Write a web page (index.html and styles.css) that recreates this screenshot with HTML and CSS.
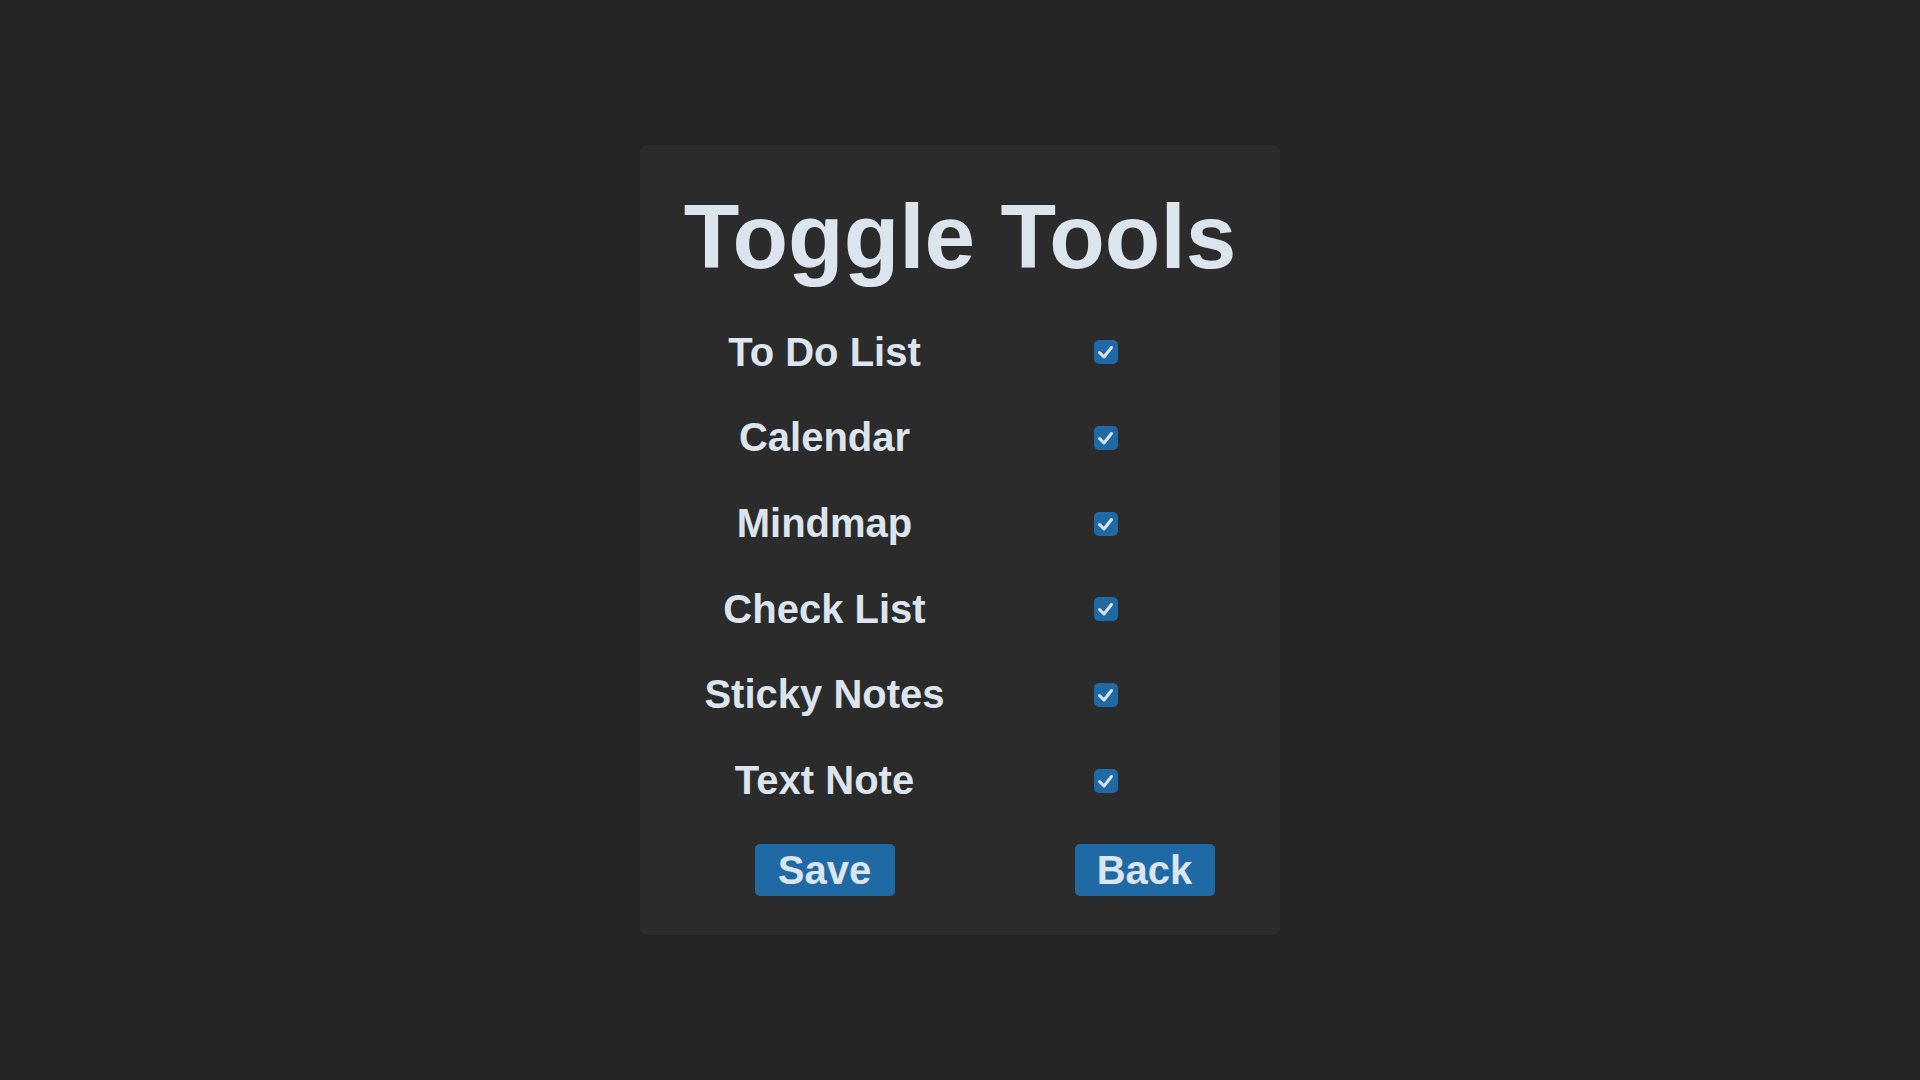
FILE: index.html
```html
<!DOCTYPE html>
<html lang="en">
<head>
<meta charset="utf-8">
<title>Toggle Tools</title>
<link rel="stylesheet" href="styles.css">
</head>
<body>
<main class="card">
  <h1 class="title">Toggle Tools</h1>
  <div class="rows">
    <div class="row"><span class="label">To Do List</span><span class="cell"><span class="check"><svg viewBox="0 0 24 24" width="24" height="24"><polyline points="5.5,12.5 10,17 17.5,7.5" /></svg></span></span></div>
    <div class="row"><span class="label">Calendar</span><span class="cell"><span class="check"><svg viewBox="0 0 24 24" width="24" height="24"><polyline points="5.5,12.5 10,17 17.5,7.5" /></svg></span></span></div>
    <div class="row"><span class="label">Mindmap</span><span class="cell"><span class="check"><svg viewBox="0 0 24 24" width="24" height="24"><polyline points="5.5,12.5 10,17 17.5,7.5" /></svg></span></span></div>
    <div class="row"><span class="label">Check List</span><span class="cell"><span class="check"><svg viewBox="0 0 24 24" width="24" height="24"><polyline points="5.5,12.5 10,17 17.5,7.5" /></svg></span></span></div>
    <div class="row"><span class="label">Sticky Notes</span><span class="cell"><span class="check"><svg viewBox="0 0 24 24" width="24" height="24"><polyline points="5.5,12.5 10,17 17.5,7.5" /></svg></span></span></div>
    <div class="row"><span class="label">Text Note</span><span class="cell"><span class="check"><svg viewBox="0 0 24 24" width="24" height="24"><polyline points="5.5,12.5 10,17 17.5,7.5" /></svg></span></span></div>
  </div>
  <div class="buttons">
    <div class="bcell"><button class="btn" type="button">Save</button></div>
    <div class="bcell"><button class="btn" type="button">Back</button></div>
  </div>
</main>
</body>
</html>
```

FILE: styles.css
```css
html, body {
  margin: 0;
  padding: 0;
  height: 100%;
}
body {
  background: #242424;
  font-family: "Liberation Sans", Arial, sans-serif;
  color: #dce4ee;
  display: flex;
  align-items: center;
  justify-content: center;
}
.card {
  width: 640px;
  height: 790px;
  box-sizing: border-box;
  background: #2b2b2b;
  border-radius: 6px;
  padding-top: 41.7px;
  display: flex;
  flex-direction: column;
}
.title {
  margin: 0;
  font-size: 91px;
  font-weight: bold;
  line-height: 100px;
  text-align: center;
}
.rows {
  margin-top: 22.9px;
  display: flex;
  flex-direction: column;
}
.row {
  display: grid;
  grid-template-columns: 369px 1fr;
  align-items: center;
  height: 85.7px;
}
.label {
  font-size: 40px;
  font-weight: bold;
  line-height: 85.7px;
  text-align: center;
}
.cell {
  display: flex;
  align-items: center;
  padding-left: 85px;
}
.check {
  width: 24px;
  height: 24px;
  border-radius: 5px;
  background: #1f6aa5;
  display: block;
}
.check svg {
  display: block;
}
.check polyline {
  fill: none;
  stroke: #dce4ee;
  stroke-width: 3;
  stroke-linecap: round;
  stroke-linejoin: round;
}
.buttons {
  margin-top: 20.5px;
  display: grid;
  grid-template-columns: 369px 1fr;
}
.bcell {
  display: flex;
  justify-content: center;
}
.btn {
  width: 140px;
  height: 52px;
  border: none;
  border-radius: 5px;
  background: #1f6aa5;
  color: #dce4ee;
  font-family: "Liberation Sans", Arial, sans-serif;
  font-size: 40px;
  font-weight: bold;
  line-height: 52px;
  padding: 0;
}
```
